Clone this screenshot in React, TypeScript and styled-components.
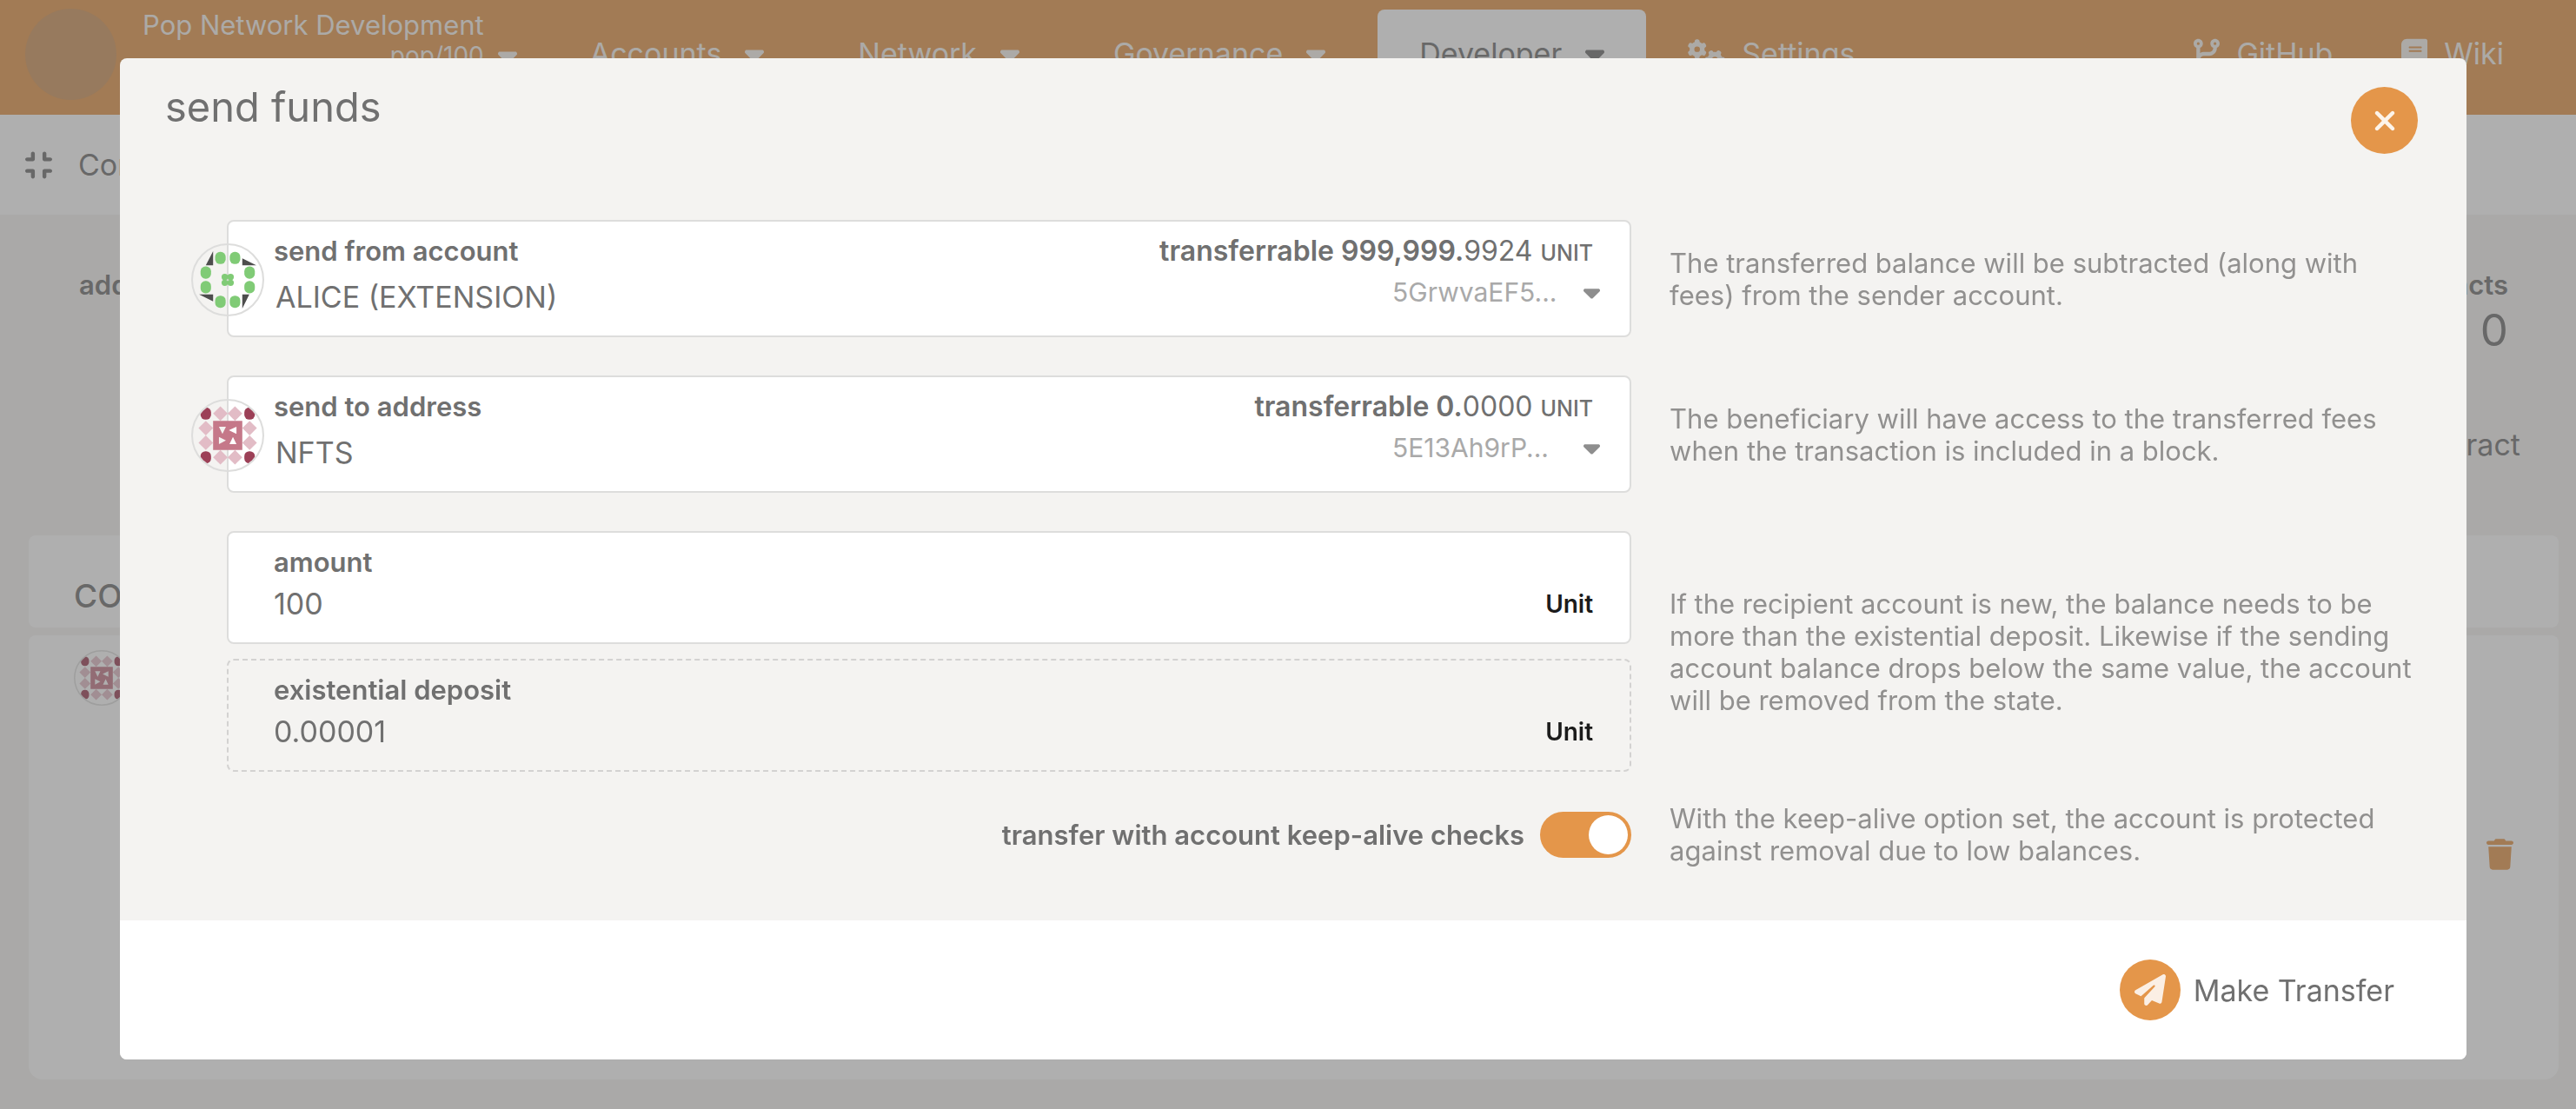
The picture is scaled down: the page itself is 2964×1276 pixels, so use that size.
import React from 'react';
import styled, { createGlobalStyle } from 'styled-components';
import {
  FaBook,
  FaCaretDown,
  FaCodeBranch,
  FaCompress,
  FaGears,
  FaPaperPlane,
  FaTrash,
  FaXmark,
} from 'react-icons/fa6';

const ORANGE = '#e4964a';
const TEXT = '#707070';
const BODY = '#f4f3f1';

const GlobalStyle = createGlobalStyle`
  *, *::before, *::after { box-sizing: border-box; }
  body {
    margin: 0;
    background: ${BODY};
    color: ${TEXT};
    font-family: Inter, "Liberation Sans", sans-serif;
    font-size: 31px;
    line-height: 37px;
  }
  button, input, select { font: inherit; color: inherit; }
`;

/* The icon glyphs have different proportions, so each box gets its own width. */
const Icon = styled.span<{ $width: number }>`
  display: flex;
  flex: none;
  svg {
    width: ${(p) => p.$width}px;
    height: 36px;
  }
`;

/* ---------- page behind the dialog ---------- */

const Page = styled.div`
  display: flex;
  flex-direction: column;
  min-height: 100vh;
`;

const TopBar = styled.header`
  display: flex;
  height: 132px;
  padding: 0 47px 0 29px;
  background: ${ORANGE};
  color: #f8f4ef;
`;

const Chain = styled.div`
  display: flex;
  align-items: flex-start;
  padding-top: 10px;
  margin-right: 36px;
`;

const ChainLogo = styled.div`
  width: 105px;
  height: 105px;
  margin-right: 30px;
  border-radius: 50%;
  background: #ce945c;
`;

const ChainText = styled.div`
  display: flex;
  flex-direction: column;
  align-items: flex-end;
`;

const ChainVersion = styled.div`
  font-size: 28px;
  line-height: 34px;
`;

const ChainCaret = styled.span`
  display: flex;
  margin: 36px 0 0 16px;
`;

const Nav = styled.nav`
  display: flex;
  flex: 1;
  align-items: flex-end;
  gap: 12px;
`;

const NavItem = styled.a<{ $active?: boolean; $withIcon?: boolean }>`
  display: flex;
  gap: ${(p) => (p.$withIcon ? 19 : 27)}px;
  height: 121px;
  padding: 29px ${(p) => (p.$withIcon ? 36 : 48)}px 0;
  border-radius: 8px 8px 0 0;
  background: ${(p) => (p.$active ? '#fff' : 'transparent')};
  color: ${(p) => (p.$active ? TEXT : 'inherit')};
  font-size: 34px;
  line-height: 44px;
  text-decoration: none;
  svg { margin-top: 4px; }
`;

const NavLinks = styled.div`
  display: flex;
  gap: 7px;
  margin-left: auto;
`;

const Tabs = styled.div`
  display: flex;
  align-items: center;
  gap: 30px;
  height: 115px;
  padding: 0 29px;
  background: #fff;
  font-size: 34px;
`;

const Summary = styled.section`
  display: flex;
  justify-content: space-between;
  height: 369px;
  padding: 62px 78px 0 91px;
  font-weight: 600;
`;

const SummaryRight = styled.div`
  display: flex;
  flex-direction: column;
  align-items: flex-end;
`;

const SummaryCount = styled.div`
  padding-top: 10px;
  font-size: 51px;
  font-weight: 400;
  line-height: 48px;
`;

const PlainButton = styled.button`
  margin: 89px -14px 0 0;
  padding: 0;
  border: 0;
  background: none;
  font-size: 34px;
  font-weight: 400;
`;

const Cards = styled.section`
  display: flex;
  flex: 1;
  flex-direction: column;
  gap: 9px;
  padding: 0 20px 34px 33px;
`;

const CardHead = styled.div`
  height: 106px;
  padding: 50px 52px 0;
  border-radius: 8px;
  background: #fff;
  font-size: 37px;
  font-weight: 500;
  line-height: 40px;
`;

const CardBody = styled.div`
  display: flex;
  flex: 1;
  align-items: flex-start;
  justify-content: space-between;
  padding: 17px 52px 0;
  border-radius: 8px 8px 16px 16px;
  background: #fff;
`;

const TrashButton = styled.button`
  display: flex;
  margin-top: 217px;
  padding: 0;
  border: 0;
  background: none;
  color: ${ORANGE};
`;

/* ---------- dialog ---------- */

const Overlay = styled.div`
  position: fixed;
  inset: 0;
  padding: 67px 126px 57px 138px;
  background: rgba(96, 96, 96, 0.5);
`;

const Dialog = styled.section`
  display: flex;
  flex-direction: column;
  overflow: hidden;
  border-radius: 8px;
  background: ${BODY};
`;

const DialogHead = styled.header`
  display: flex;
  align-items: flex-start;
  justify-content: space-between;
  padding: 33px 56px 0 52px;
`;

const Title = styled.h1`
  margin: 0;
  font-size: 47px;
  font-weight: 400;
  line-height: 46px;
`;

const CloseButton = styled.button`
  display: flex;
  align-items: center;
  justify-content: center;
  width: 77px;
  height: 77px;
  padding: 0;
  border: 0;
  border-radius: 50%;
  background: ${ORANGE};
  color: #fdf4ea;
`;

const DialogBody = styled.div`
  padding: 76px 55px 62px 123px;
`;

const Row = styled.div<{ $top?: number }>`
  display: grid;
  grid-template-columns: 15fr 8fr;
  align-items: center;
  column-gap: 44px;
  margin-top: ${(p) => p.$top ?? 0}px;
`;

const Help = styled.p`
  margin: 0;
  color: #91908f;
`;

const FieldGroup = styled.div`
  display: grid;
  gap: 17px;
`;

const Field = styled.div<{ $dashed?: boolean }>`
  position: relative;
  display: flex;
  justify-content: space-between;
  padding: 15px 34px 22px 52px;
  border: ${(p) => (p.$dashed ? '2px dashed #d3d2d1' : '2px solid #dddddc')};
  border-radius: 8px;
  background: ${(p) => (p.$dashed ? 'transparent' : '#fff')};
`;

const FieldMain = styled.div<{ $gap: number }>`
  display: flex;
  flex: 1;
  flex-direction: column;
  align-items: flex-start;
  gap: ${(p) => p.$gap}px;
`;

const Label = styled.label`
  font-weight: 600;
  line-height: 38px;
`;

const AccountSelect = styled.select`
  width: 100%;
  height: 44px;
  padding: 0 0 0 2px;
  border: 0;
  outline: 0;
  appearance: none;
  background: transparent;
  font-size: 34px;
  line-height: 44px;
`;

const ValueInput = styled.input`
  width: 100%;
  height: 44px;
  padding: 0;
  border: 0;
  outline: 0;
  background: transparent;
  font-size: 34px;
  line-height: 44px;
`;

const FieldSide = styled.div`
  display: flex;
  flex-direction: column;
  align-items: flex-end;
  gap: 7px;
  line-height: 38px;
`;

const Balance = styled.div`
  padding-right: 8px;
  font-size: 32px;
  b { font-weight: 600; }
  small { font-size: 25px; font-weight: 500; }
`;

const AddressLine = styled.div`
  display: flex;
  align-items: center;
  color: #a9a9a9;
  font-size: 30px;
  svg { color: #8e8e8e; }
`;

const Address = styled.span`
  width: 220px;
`;

const UnitText = styled.span`
  align-self: flex-end;
  padding-right: 8px;
  color: #1b1b1b;
  font-size: 28px;
  font-weight: 600;
  line-height: 44px;
`;

const Avatar = styled.div`
  position: absolute;
  top: 25px;
  left: -43px;
  display: flex;
`;

const ToggleLabel = styled.label`
  display: flex;
  align-items: center;
  justify-content: flex-end;
  gap: 18px;
  font-weight: 600;
`;

const Toggle = styled.input`
  display: flex;
  align-items: center;
  justify-content: flex-end;
  width: 105px;
  height: 53px;
  margin: 0;
  padding: 0 4px;
  appearance: none;
  border-radius: 27px;
  background: ${ORANGE};
  &::before {
    content: '';
    width: 45px;
    height: 45px;
    border-radius: 50%;
    background: #fff;
  }
`;

const DialogFoot = styled.footer`
  display: flex;
  justify-content: flex-end;
  padding: 45px 83px;
  background: #fff;
`;

const SubmitButton = styled.button`
  display: flex;
  align-items: center;
  gap: 15px;
  padding: 0;
  border: 0;
  background: none;
  font-size: 34px;
`;

const SubmitIcon = styled.span`
  display: flex;
  align-items: center;
  justify-content: center;
  width: 70px;
  height: 70px;
  border-radius: 50%;
  background: ${ORANGE};
  color: #fbefe4;
`;

/* ---------- identicons ---------- */

function GreenIdenticon({ size }: { size: number }) {
  const dots = [
    [100, 50], [150, 50], [50, 100], [50, 150],
    [200, 100], [200, 150], [100, 200], [150, 200],
  ];
  const core = [[115, 115], [135, 115], [115, 135], [135, 135]];
  return (
    <svg width={size} height={size} viewBox="0 0 250 250" aria-hidden="true">
      <circle cx="125" cy="125" r="122" fill="none" stroke="#dddddc" strokeWidth="6" />
      {dots.map(([x, y]) => (
        <rect key={`${x}-${y}`} x={x - 18} y={y - 21} width="36" height="42" rx="17" fill="#80cb76" />
      ))}
      {core.map(([x, y]) => (
        <circle key={`${x}-${y}`} cx={x} cy={y} r="11" fill="#80cb76" />
      ))}
      <path
        fill="#4d4d4d"
        d="M75 27v48H50zM175 51v24h48zM175 175h24l-24 48zM27 175h48v24z"
      />
    </svg>
  );
}

function RoseIdenticon({ size, id }: { size: number; id: string }) {
  const corners = [[50, 50], [200, 50], [50, 200], [200, 200]];
  const diamonds = [
    [100, 50], [150, 50], [50, 100], [50, 150],
    [200, 100], [200, 150], [100, 200], [150, 200],
  ];
  return (
    <svg width={size} height={size} viewBox="0 0 250 250" aria-hidden="true">
      <clipPath id={id}>
        <circle cx="125" cy="125" r="119" />
      </clipPath>
      <circle cx="125" cy="125" r="122" fill="none" stroke="#dddddc" strokeWidth="6" />
      <g clipPath={`url(#${id})`}>
        {corners.map(([x, y]) => (
          <rect key={`${x}-${y}`} x={x - 18} y={y - 21} width="36" height="42" rx="17" fill="#9c4057" />
        ))}
        {diamonds.map(([x, y]) => (
          <path key={`${x}-${y}`} d={`M${x} ${y - 25}l25 25-25 25-25-25z`} fill="#e2bcc6" />
        ))}
        <path
          fill="#c57889"
          fillRule="evenodd"
          d="M75 75h100v100H75zM95 95h24l-12 25zM129 107l26-12v25zM95 130l24 12-24 13zM143 130l12 25h-24z"
        />
      </g>
    </svg>
  );
}

/* ---------- parts ---------- */

function Caret({ small }: { small?: boolean }) {
  return (
    <Icon $width={small ? 19 : 22}>
      <FaCaretDown />
    </Icon>
  );
}

interface AccountFieldProps {
  id: string;
  label: string;
  name: string;
  whole: string;
  decimals: string;
  address: string;
  icon: React.ReactNode;
}

function AccountField({ id, label, name, whole, decimals, address, icon }: AccountFieldProps) {
  return (
    <Field>
      <Avatar>{icon}</Avatar>
      <FieldMain $gap={12}>
        <Label htmlFor={id}>{label}</Label>
        <AccountSelect id={id} defaultValue={name}>
          <option>{name}</option>
        </AccountSelect>
      </FieldMain>
      <FieldSide>
        <Balance>
          <b>transferrable {whole}.</b>
          {decimals} <small>UNIT</small>
        </Balance>
        <AddressLine>
          <Address>{address}</Address>
          <Caret small />
        </AddressLine>
      </FieldSide>
    </Field>
  );
}

interface AmountFieldProps {
  id: string;
  label: string;
  value: string;
  readOnly?: boolean;
}

function AmountField({ id, label, value, readOnly }: AmountFieldProps) {
  return (
    <Field $dashed={readOnly}>
      <FieldMain $gap={7}>
        <Label htmlFor={id}>{label}</Label>
        <ValueInput id={id} type="text" defaultValue={value} readOnly={readOnly} />
      </FieldMain>
      <UnitText>Unit</UnitText>
    </Field>
  );
}

const MENUS = ['Accounts', 'Network', 'Governance', 'Developer'];

export default function App() {
  return (
    <>
      <GlobalStyle />
      <Page>
        <TopBar>
          <Chain>
            <ChainLogo />
            <ChainText>
              <div>Pop Network Development</div>
              <ChainVersion>pop/100</ChainVersion>
            </ChainText>
            <ChainCaret>
              <Caret />
            </ChainCaret>
          </Chain>
          <Nav>
            {MENUS.map((menu) => (
              <NavItem key={menu} href="#" $active={menu === 'Developer'}>
                {menu}
                <Caret />
              </NavItem>
            ))}
            <NavItem href="#" $withIcon>
              <Icon $width={43}>
                <FaGears />
              </Icon>
              Settings
            </NavItem>
            <NavLinks>
              <NavItem href="#" $withIcon>
                <Icon $width={30}>
                  <FaCodeBranch />
                </Icon>
                GitHub
              </NavItem>
              <NavItem href="#" $withIcon>
                <Icon $width={30}>
                  <FaBook />
                </Icon>
                Wiki
              </NavItem>
            </NavLinks>
          </Nav>
        </TopBar>
        <Tabs>
          <Icon $width={31}>
            <FaCompress />
          </Icon>
          Contracts
        </Tabs>
        <Summary>
          <div>addresses</div>
          <SummaryRight>
            <div>contracts</div>
            <SummaryCount>0</SummaryCount>
            <PlainButton type="button">contract</PlainButton>
          </SummaryRight>
        </Summary>
        <Cards>
          <CardHead>CONTRACTS</CardHead>
          <CardBody>
            <RoseIdenticon size={64} id="rose-list" />
            <TrashButton type="button" aria-label="Remove">
              <Icon $width={31}>
                <FaTrash />
              </Icon>
            </TrashButton>
          </CardBody>
        </Cards>
      </Page>

      <Overlay>
        <Dialog role="dialog" aria-labelledby="dialog-title">
          <DialogHead>
            <Title id="dialog-title">send funds</Title>
            <CloseButton type="button" aria-label="Close">
              <Icon $width={36}>
                <FaXmark />
              </Icon>
            </CloseButton>
          </DialogHead>
          <DialogBody>
            <Row>
              <AccountField
                id="from"
                label="send from account"
                name="ALICE (EXTENSION)"
                whole="999,999"
                decimals="9924"
                address="5GrwvaEF5..."
                icon={<GreenIdenticon size={84} />}
              />
              <Help>
                The transferred balance will be subtracted (along with fees) from the sender account.
              </Help>
            </Row>
            <Row $top={44}>
              <AccountField
                id="to"
                label="send to address"
                name="NFTS"
                whole="0"
                decimals="0000"
                address="5E13Ah9rP..."
                icon={<RoseIdenticon size={84} id="rose-field" />}
              />
              <Help>
                The beneficiary will have access to the transferred fees when the transaction is
                included in a block.
              </Help>
            </Row>
            <Row $top={44}>
              <FieldGroup>
                <AmountField id="amount" label="amount" value="100" />
                <AmountField id="deposit" label="existential deposit" value="0.00001" readOnly />
              </FieldGroup>
              <Help>
                If the recipient account is new, the balance needs to be more than the existential
                deposit. Likewise if the sending account balance drops below the same value, the
                account will be removed from the state.
              </Help>
            </Row>
            <Row $top={35}>
              <ToggleLabel>
                transfer with account keep-alive checks
                <Toggle type="checkbox" defaultChecked />
              </ToggleLabel>
              <Help>
                With the keep-alive option set, the account is protected against removal due to low
                balances.
              </Help>
            </Row>
          </DialogBody>
          <DialogFoot>
            <SubmitButton type="button">
              <SubmitIcon>
                <Icon $width={36}>
                  <FaPaperPlane />
                </Icon>
              </SubmitIcon>
              Make Transfer
            </SubmitButton>
          </DialogFoot>
        </Dialog>
      </Overlay>
    </>
  );
}
